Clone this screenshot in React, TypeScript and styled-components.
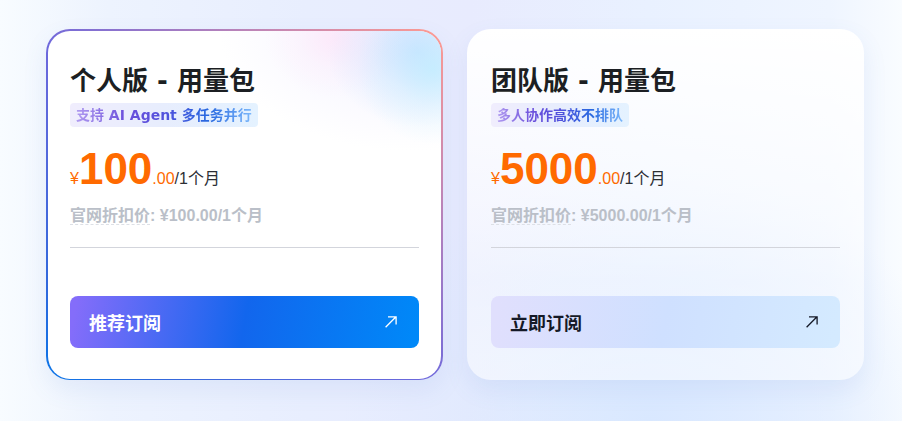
import styled, { createGlobalStyle, css } from "styled-components";

const GlobalStyle = createGlobalStyle`
  *,
  *::before,
  *::after {
    box-sizing: border-box;
  }

  body {
    margin: 0;
    font-family: "Liberation Sans", "Noto Sans CJK SC", sans-serif;
    color: #1c1f23;
    background-color: #f5f9ff;
  }
`;

const Page = styled.main`
  min-height: 100vh;
  padding: 29px 38px 41px 46px;
  background:
    radial-gradient(ellipse 34% 60% at 72% 100%, #d9e8ff 0%, transparent 100%),
    linear-gradient(
      90deg,
      #f8fcff 0%,
      #edf3fe 12%,
      #e8eefe 34%,
      #e8ebfe 52%,
      #e9f1ff 72%,
      #eff5ff 92%,
      #f9fcff 100%
    );
`;

const Plans = styled.section`
  display: grid;
  grid-template-columns: repeat(2, minmax(0, 1fr));
  gap: 24px;
`;

const Card = styled.article<{ $featured?: boolean }>`
  display: flex;
  flex-direction: column;
  align-items: flex-start;
  padding: 32px 22px 31px;
  border: solid transparent;
  border-width: 2px 2px 1px;
  border-radius: 24px;
  box-shadow: 0 10px 24px rgba(90, 130, 210, 0.1);
  ${(props) =>
    props.$featured
      ? css`
          background:
            radial-gradient(
                ellipse 75px 75px at 98% 11%,
                rgba(190, 238, 255, 0.7),
                rgba(190, 238, 255, 0.25) 50%,
                rgba(190, 238, 255, 0)
              )
              padding-box,
            radial-gradient(
                ellipse 90px 75px at 94% 6%,
                rgba(196, 222, 255, 0.8),
                rgba(196, 222, 255, 0.3) 50%,
                rgba(196, 222, 255, 0)
              )
              padding-box,
            radial-gradient(
                ellipse 70px 60px at 73% 2%,
                rgba(255, 228, 248, 0.7),
                rgba(255, 228, 248, 0.25) 50%,
                rgba(255, 228, 248, 0)
              )
              padding-box,
            radial-gradient(
                ellipse 190px 120px at 92% 0%,
                rgba(238, 236, 255, 0.85),
                rgba(238, 236, 255, 0.35) 55%,
                rgba(238, 236, 255, 0)
              )
              padding-box,
            linear-gradient(#fff, #fff) padding-box,
            linear-gradient(
                to top right,
                #0875e8 0%,
                #3268dc 14%,
                #6e68dc 48%,
                #c487b4 78%,
                #ff9b91 100%
              )
              border-box;
        `
      : css`
          background: linear-gradient(
              180deg,
              #fff 0%,
              rgba(255, 255, 255, 0.7) 38%,
              rgba(255, 255, 255, 0.4) 72%,
              rgba(255, 255, 255, 0.5) 100%
            )
            border-box;
        `}
`;

const Title = styled.h2`
  margin: 0;
  font-family: "DejaVu Sans", "Noto Sans CJK SC", sans-serif;
  font-size: 26px;
  line-height: 36px;
  font-weight: 700;
`;

const Tag = styled.p`
  margin: 4px 0 0;
  padding: 0 6px;
  border-radius: 4px;
  background: linear-gradient(90deg, #f0edfd, #e7edfd 50%, #e4f2ff);
`;

const TagText = styled.span`
  display: block;
  font-family: "DejaVu Sans", "Noto Sans CJK SC", sans-serif;
  font-size: 14px;
  line-height: 24px;
  font-weight: 700;
  color: transparent;
  background: linear-gradient(
    90deg,
    #b09af0 0%,
    #6c50dc 28%,
    #5151dc 50%,
    #2868e0 75%,
    #7cb8fb 100%
  );
  background-clip: text;
`;

const Price = styled.p`
  display: flex;
  align-items: baseline;
  margin: 20px 0 0;
  font-size: 16px;
  line-height: 44px;
  color: #ff6a00;
`;

const Amount = styled.strong`
  font-size: 44px;
`;

const Period = styled.span`
  color: #2c2f35;
`;

const Discount = styled.p`
  margin: 3px 0 0;
  font-size: 16px;
  line-height: 24px;
  font-weight: 700;
  color: #babfc8;
`;

const DiscountLabel = styled.abbr`
  text-decoration: underline dashed 1px #dde0e6;
  text-underline-offset: 3px;
`;

const Divider = styled.hr`
  width: 100%;
  margin: 19px 0 48px;
  border: 0;
  border-top: 1px solid #d3d5dc;
`;

const SubscribeButton = styled.button<{ $featured?: boolean }>`
  display: flex;
  align-items: center;
  justify-content: space-between;
  width: 100%;
  height: 52px;
  padding: 0 22px 0 19px;
  border: 0;
  border-radius: 8px;
  font-family: "Noto Sans CJK SC", sans-serif;
  font-size: 18px;
  font-weight: 700;
  cursor: pointer;
  color: ${(props) => (props.$featured ? "#fff" : "#151927")};
  background: ${(props) =>
    props.$featured
      ? "linear-gradient(100deg, #846dfa 2%, #1266ed 50%, #0088f8 98%)"
      : "linear-gradient(100deg, #e0dffd 2%, #cfe0ff 50%, #d4eaff 98%)"};
`;

const plans = [
  {
    name: "个人版 - 用量包",
    tag: "支持 AI Agent 多任务并行",
    price: "100",
    action: "推荐订阅",
    featured: true,
  },
  {
    name: "团队版 - 用量包",
    tag: "多人协作高效不排队",
    price: "5000",
    action: "立即订阅",
    featured: false,
  },
];

function ArrowIcon() {
  return (
    <svg
      width="12"
      height="12"
      viewBox="0 0 12 12"
      fill="none"
      stroke="currentColor"
      strokeWidth="1.3"
      aria-hidden="true"
    >
      <path d="M.6 11.2 11 .8M3 .8h8.1v7.7" />
    </svg>
  );
}

function PlanCard({ plan }: { plan: (typeof plans)[number] }) {
  return (
    <Card $featured={plan.featured}>
      <Title>{plan.name}</Title>
      <Tag>
        <TagText>{plan.tag}</TagText>
      </Tag>
      <Price>
        ¥<Amount>{plan.price}</Amount>.00
        <Period>/1个月</Period>
      </Price>
      <Discount>
        <DiscountLabel>官网折扣价</DiscountLabel>: ¥{plan.price}.00/1个月
      </Discount>
      <Divider />
      <SubscribeButton type="button" $featured={plan.featured}>
        {plan.action}
        <ArrowIcon />
      </SubscribeButton>
    </Card>
  );
}

function App() {
  return (
    <>
      <GlobalStyle />
      <Page>
        <Plans>
          {plans.map((plan) => (
            <PlanCard key={plan.name} plan={plan} />
          ))}
        </Plans>
      </Page>
    </>
  );
}

export default App;
